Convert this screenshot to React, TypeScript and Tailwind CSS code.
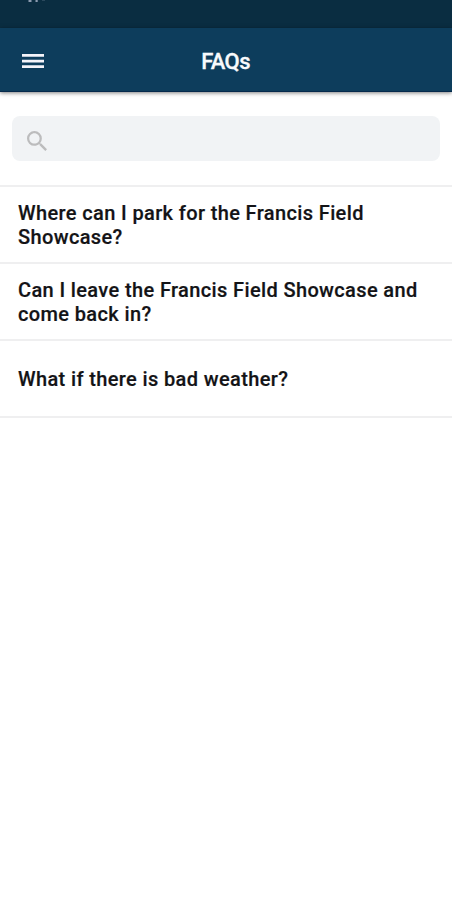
const faqs = [
  'Where can I park for the Francis Field Showcase?',
  'Can I leave the Francis Field Showcase and come back in?',
  'What if there is bad weather?',
];

export default function App() {
  return (
    <div className="flex h-[900px] w-[452px] flex-col overflow-hidden bg-white font-['Roboto',sans-serif] text-[#131316]">
      <div className="relative h-7 shrink-0 bg-[#0a2d41]">
        <svg className="absolute left-[28px] top-0" width="20" height="3" viewBox="0 0 20 3" fill="#8c9bb0">
          <rect x="0.5" y="0" width="3" height="2" />
          <rect x="7.5" y="0" width="2.2" height="2" />
          <rect x="14" y="0" width="3" height="1" opacity="0.25" />
        </svg>
      </div>
      <header className="relative z-10 grid h-16 shrink-0 grid-cols-[1fr_auto_1fr] items-center border-b border-[#062a4c] bg-[#0d3d5c] shadow-[0_1px_4px_rgba(0,0,0,0.5)]">
        <button aria-label="Menu" className="ml-[22px] w-[22px] pt-0.5">
          <svg className="block" width="22" height="16" viewBox="0 0 22 16" fill="#f4f4fa">
            <path d="M0 1h22v2.7H0zM0 6.7h22v2.7H0zM0 12.3h22v2.7H0z" />
          </svg>
        </button>
        <h1 className="pr-px pt-1 text-[22px] font-medium tracking-[-0.6px] text-[#f8fafc] [-webkit-text-stroke:0.3px_#f8fafc]">FAQs</h1>
      </header>
      <div className="px-3 pb-6 pt-6">
        <div className="flex h-[45px] items-center rounded-lg bg-[#f1f3f5] pl-[15px] pt-1">
          <svg width="20" height="20" viewBox="3 3 17.5 17.5" fill="#bcbcbd">
            <path d="M15.5 14h-.79l-.28-.27A6.47 6.47 0 0 0 16 9.5 6.5 6.5 0 1 0 9.5 16c1.61 0 3.09-.59 4.23-1.57l.27.28v.79l5 4.99L20.49 19l-4.99-5zm-6 0C7.01 14 5 11.99 5 9.5S7.01 5 9.5 5 14 7.01 14 9.5 11.99 14 9.5 14z" />
          </svg>
        </div>
      </div>
      <ul className="border-t-2 border-[#efeff0]">
        {faqs.map((q) => (
          <li key={q} className="flex h-[77px] items-center border-b-2 border-[#efeff0] pl-[18px] pr-6 text-[20px] font-medium leading-6 tracking-[0.37px] [-webkit-text-stroke:0.2px_#131316]">
            {q}
          </li>
        ))}
      </ul>
    </div>
  );
}
